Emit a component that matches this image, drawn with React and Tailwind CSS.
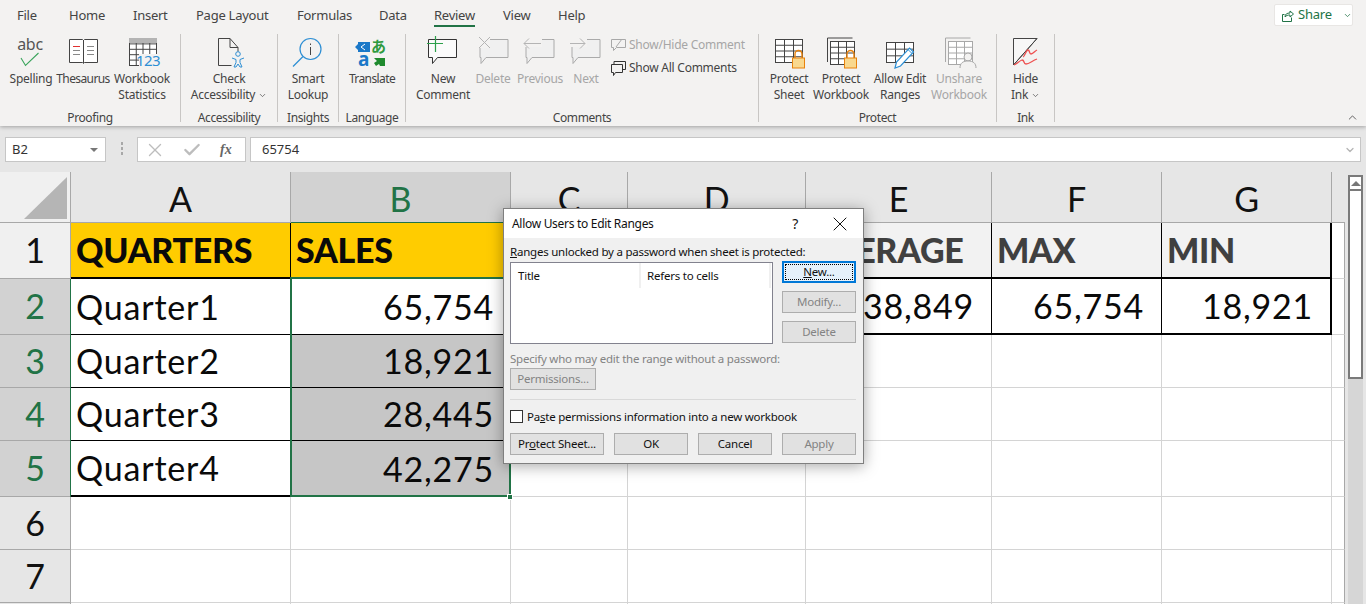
import { ChevronDown, ChevronUp, X, Check } from 'lucide-react';

const tabs = [
  { t: 'File', w: 'w-[52px]' },
  { t: 'Home', w: 'w-[64px]' },
  { t: 'Insert', w: 'w-[63px]' },
  { t: 'Page Layout', w: 'w-[101px]' },
  { t: 'Formulas', w: 'w-[82px]' },
  { t: 'Data', w: 'w-[55px]' },
  { t: 'Review', w: 'w-[69px]' },
  { t: 'View', w: 'w-[55px]' },
  { t: 'Help', w: 'w-[40px]' },
];

// icons are drawn in screen coordinates, the viewBox moves them into the 44x32 box
function Icon({ x0, children }) {
  return (
    <svg width="44" height="32" viewBox={`${x0} 36 44 32`} fill="none" className="shrink-0 overflow-visible">
      {children}
    </svg>
  );
}

function Sheet({ x, y, w, h, c = '#444', rows = 4, cols = 3 }) {
  const lines = [];
  for (let i = 1; i < rows; i++) lines.push(<path key={'r' + i} d={`M${x} ${y + (h * i) / rows}h${w}`} stroke={c} />);
  for (let i = 1; i < cols; i++) lines.push(<path key={'c' + i} d={`M${x + (w * i) / cols} ${y}v${h}`} stroke={c} />);
  return (
    <g>
      <rect x={x} y={y} width={w} height={h} stroke={c} fill="#fff" />
      {lines}
    </g>
  );
}

function Lock({ x, y }) {
  return (
    <g>
      <path d={`M${x + 3} ${y + 8}v-4a3.5 3.5 0 0 1 7 0v4`} stroke="#e8820c" strokeWidth="1.4" />
      <rect x={x + 0.5} y={y + 8} width="12" height="10" fill="#f9d88e" stroke="#e8820c" />
    </g>
  );
}

function Bubble({ x, c = '#aaa', fill = '#f0f0f0' }) {
  return <path d={`M${x + 0.5} 39.5h28v18h-22l-5 6v-6h-1z`} stroke={c} fill={fill} />;
}

const icons = {
  spelling: (
    <Icon x0={9}>
      <text x="30" y="50" textAnchor="middle" fontSize="16" fill="#555" fontFamily="Noto Sans">abc</text>
      <path d="M21 58l4.500 7.500L38.500 53" stroke="#3aa45c" strokeWidth="1.1" />
    </Icon>
  ),
  thesaurus: (
    <Icon x0={61}>
      <path d="M69.500 39.500h13l1 1 1-1h13v23h-13l-1 1-1-1h-13z" stroke="#444" fill="#fff" />
      <path d="M83.500 40v23" stroke="#444" />
      <path d="M73 46.500h7" stroke="#e03030" />
      <path d="M73 50.500h7M73 54.500h7M87 46.500h7M87 50.500h7M87 54.500h7" stroke="#888" />
    </Icon>
  ),
  statistics: (
    <Icon x0={120}>
      <Sheet x={129.500} y={38.500} w={27} h={27} rows={5} cols={4} />
      <rect x="129" y="38" width="28" height="5" fill="#b4b4b4" />
      <rect x="139" y="54" width="19" height="13" fill="#f3f2f1" />
      <text x="148" y="66" textAnchor="middle" fontSize="15" letterSpacing="-0.5" fill="#2e8fd4" fontFamily="Noto Sans">123</text>
    </Icon>
  ),
  accessibility: (
    <Icon x0={207}>
      <path d="M218.500 38.500h11.500l8 9v4" stroke="#444" />
      <path d="M218.500 38.500v27h13M230 38.500v9h8" stroke="#444" />
      <circle cx="238" cy="54" r="2.300" stroke="#2e8fd4" />
      <path d="M232 58l4 1.500v3l-2 4.500h2l2-3 2 3h2l-2-4.500v-3l4-1.500" stroke="#2e8fd4" />
    </Icon>
  ),
  lookup: (
    <Icon x0={286}>
      <circle cx="310.500" cy="49" r="10.500" stroke="#2e8fd4" strokeWidth="1.2" />
      <path d="M293 66.500l10-10" stroke="#2e8fd4" strokeWidth="1.2" />
      <path d="M310.500 47v8M310.500 43.500v1.500" stroke="#444" />
    </Icon>
  ),
  translate: (
    <Icon x0={350}>
      <path d="M358 42h12v10h-12l0-2-3-3 3-3z" fill="#1a78c8" />
      <path d="M365 44l-4 3 4 3" stroke="#fff" />
      <text x="363.500" y="66" textAnchor="middle" fontSize="19" fontWeight="700" fill="#1a78c8" fontFamily="Noto Sans">a</text>
      <text x="378.500" y="52" textAnchor="middle" fontSize="15" fontWeight="700" fill="#2e9a3e" fontFamily="Noto Sans CJK JP">あ</text>
      <path d="M374 58h11v8h-5l-1-2-3 2-2-3 3-2z" fill="#1f8a2e" />
    </Icon>
  ),
  newComment: (
    <Icon x0={421}>
      <path d="M428.500 39.500h28v18h-19l-5 6v-6h-4z" stroke="#333" fill="#fbfbfb" />
      <path d="M427 43.500h16M435.500 36v16" stroke="#2ca04a" strokeWidth="1.2" />
    </Icon>
  ),
  deleteComment: (
    <Icon x0={471}>
      <Bubble x={479.500} />
      <rect x="478" y="37" width="12" height="11" fill="#f3f2f1" />
      <path d="M479 37l11 11M490 37l-11 11" stroke="#b4b4b4" />
    </Icon>
  ),
  previous: (
    <Icon x0={518}>
      <Bubble x={525.500} />
      <rect x="524" y="39" width="18" height="8" fill="#f3f2f1" />
      <path d="M524 43.500h17M529 38.500l-5 5 5 5" stroke="#b4b4b4" />
    </Icon>
  ),
  next: (
    <Icon x0={564}>
      <Bubble x={571.500} />
      <rect x="569" y="39" width="18" height="8" fill="#f3f2f1" />
      <path d="M570 43.500h15M580 38.500l5 5-5 5" stroke="#b4b4b4" />
    </Icon>
  ),
  protectSheet: (
    <Icon x0={767}>
      <Sheet x={775.500} y={39.500} w={27} h={23} rows={4} cols={3} />
      <Lock x={792} y={50} />
    </Icon>
  ),
  protectWorkbook: (
    <Icon x0={819}>
      <path d="M827.500 62v-24h25" stroke="#444" />
      <Sheet x={830.500} y={41.500} w={24} h={23} rows={4} cols={3} />
      <Lock x={844} y={50} />
    </Icon>
  ),
  allowEdit: (
    <Icon x0={878}>
      <Sheet x={886.500} y={42.500} w={27} h={20} rows={3} cols={3} />
      <path d="M895 68l1.500-6 13-14 4 4-13 14z" fill="#fff" stroke="#2e8fd4" strokeWidth="1.2" />
      <path d="M908 49.500l4 4" stroke="#2e8fd4" />
    </Icon>
  ),
  unshare: (
    <Icon x0={937}>
      <path d="M945.500 62v-24h25" stroke="#a8a8a8" />
      <Sheet x={948.500} y={41.500} w={24} h={23} rows={4} cols={3} c="#a8a8a8" />
      <circle cx="968" cy="57" r="4" fill="#f3f2f1" stroke="#a8a8a8" />
      <path d="M960 68c0-5 3-7 8-7s8 2 8 7" fill="#f3f2f1" stroke="#a8a8a8" />
    </Icon>
  ),
  ink: (
    <Icon x0={1003}>
      <path d="M1012.500 65V38.500H1036z" fill="#f7f7f7" stroke="#444" />
      <path d="M1012.500 65L1036 38.500" stroke="#444" />
      <path d="M1022 57c2-1 3-7 5-7s1 4 3 4 4-3 6-4" stroke="#ee5050" strokeWidth="1.300" />
      <path d="M1013 65c3-1 5-4 8-5 3 0 1 4 4 4s6-3 11-5" stroke="#ee5050" strokeWidth="1.300" />
    </Icon>
  ),
};

function RibbonButton({ icon, lines, w, muted, caret, tight }) {
  return (
    <div className={`flex flex-col items-center shrink-0 ${w}`}>
      <div className="mt-[2px] mb-[3px] h-8 flex justify-center">{icon}</div>
      {lines.map((t, i) => (
        <div
          key={t}
          className={`h-4 leading-4 whitespace-nowrap flex items-center gap-[3px] ${muted ? 'text-[#a6a6a6]' : 'text-[#444]'} ${tight ? 'tracking-[-0.6px]' : ''}`}
        >
          {t}
          {caret && i === lines.length - 1 && <ChevronDown size={9} strokeWidth={2} className="text-[#555]" />}
        </div>
      ))}
    </div>
  );
}

function Group({ label, w, className = '', children }) {
  return (
    <div className={`shrink-0 h-[88px] mt-[4px] border-r border-[#c8c6c4] flex flex-col ${w}`}>
      <div className={`flex flex-1 ${className}`}>{children}</div>
      <div className="h-3 leading-4 text-center text-[#444] tracking-[-0.4px]">{label}</div>
    </div>
  );
}

function Ribbon() {
  return (
    <div className="relative z-10 h-[126px] bg-[#f3f2f1] shadow-[0_1px_4px_rgba(0,0,0,0.3)] text-[12px] tracking-[-0.25px]">
      <div className="h-[30px] flex pl-[17px] text-[13px] tracking-[-0.25px] text-[#444]">
        {tabs.map(({ t, w }) => (
          <div key={t} className={`${w} h-[30px] flex items-center pt-[1px] whitespace-nowrap`}>
            <span className="relative">
              {t}
              {t === 'Review' && <span className="absolute left-0 right-0 top-[19px] h-[2px] bg-[#217346]" />}
            </span>
          </div>
        ))}
      </div>
      <div className="absolute left-[1274px] top-[4px] w-[79px] h-[22px] bg-white border border-[#e8e6e4] rounded-[2px] flex items-center pl-[7px] text-[#217346] text-[13px] tracking-[-0.2px]">
        <svg width="12" height="13" viewBox="0 0 12 13" fill="none" stroke="#217346" className="mr-[4px]">
          <path d="M2.500 5.500H.500v7h9v-4M3 8c0-3 2-4 5-4V2l3.500 3L8 8V6C6 6 4 6.500 3 8z" />
        </svg>
        Share
        <ChevronDown size={9} strokeWidth={2} className="ml-[11px] text-[#217346]" />
      </div>
      <div className="flex h-[96px]">
        <Group label="Proofing" w="w-[181px]" className="pl-[5px]">
          <RibbonButton w="w-[52px]" icon={icons.spelling} lines={['Spelling']} />
          <RibbonButton w="w-[52px]" tight icon={icons.thesaurus} lines={['Thesaurus']} />
          <RibbonButton w="w-[66px]" icon={icons.statistics} lines={['Workbook', 'Statistics']} />
        </Group>
        <Group label="Accessibility" w="w-[97px]" className="justify-center">
          <RibbonButton w="w-[90px]" icon={icons.accessibility} lines={['Check', 'Accessibility']} caret />
        </Group>
        <Group label="Insights" w="w-[61px]" className="justify-center">
          <RibbonButton w="w-[50px]" icon={icons.lookup} lines={['Smart', 'Lookup']} />
        </Group>
        <Group label="Language" w="w-[67px]" className="justify-center">
          <RibbonButton w="w-[60px]" tight icon={icons.translate} lines={['Translate']} />
        </Group>
        <Group label="Comments" w="w-[353px]" className="pl-[12px]">
          <RibbonButton w="w-[50px]" icon={icons.newComment} lines={['New', 'Comment']} />
          <RibbonButton w="w-[50px]" muted icon={icons.deleteComment} lines={['Delete']} />
          <RibbonButton w="w-[44px]" muted icon={icons.previous} lines={['Previous']} />
          <RibbonButton w="w-[48px]" muted icon={icons.next} lines={['Next']} />
          <div className="flex flex-col mt-[3px] ml-[1px] gap-[7px]">
            <div className="h-4 flex items-center gap-[3px] text-[#a6a6a6] whitespace-nowrap">
              <svg width="15" height="14" viewBox="0 0 15 14" fill="none" stroke="#a8a8a8">
                <path d="M.500 1.500h14v8h-9l-3 3v-3h-2zM11 1l-6 8" />
              </svg>
              Show/Hide Comment
            </div>
            <div className="h-4 flex items-center gap-[3px] text-[#444] whitespace-nowrap">
              <svg width="15" height="15" viewBox="0 0 15 15" fill="none" stroke="#333">
                <path d="M.500 3.500h11v8h-7l-2 3v-3h-2zM3 3.500v-3h11.500v8h-3" />
              </svg>
              Show All Comments
            </div>
          </div>
        </Group>
        <Group label="Protect" w="w-[238px]" className="pl-[4px]">
          <RibbonButton w="w-[52px]" icon={icons.protectSheet} lines={['Protect', 'Sheet']} />
          <RibbonButton w="w-[52px]" icon={icons.protectWorkbook} lines={['Protect', 'Workbook']} />
          <RibbonButton w="w-[66px]" icon={icons.allowEdit} lines={['Allow Edit', 'Ranges']} />
          <RibbonButton w="w-[52px]" muted icon={icons.unshare} lines={['Unshare', 'Workbook']} />
        </Group>
        <Group label="Ink" w="w-[58px]" className="justify-center">
          <RibbonButton w="w-[50px]" icon={icons.ink} lines={['Hide', 'Ink']} caret />
        </Group>
      </div>
      <ChevronUp size={13} strokeWidth={1.500} className="absolute left-[1346px] top-[111px] text-[#444]" />
    </div>
  );
}

function FormulaBar() {
  return (
    <div className="h-[46px] bg-[#e6e6e6] flex items-start pt-[11px] pl-[5px] pr-[5px] text-[13px] text-[#333]">
      <div className="w-[101px] h-[25px] bg-white border border-[#c6c6c6] flex items-center justify-between pl-[6px] pr-[7px] pt-[1px]">
        B2
        <div className="w-0 h-0 border-x-[4px] border-x-transparent border-t-[4px] border-t-[#777]" />
      </div>
      <div className="w-[31px] flex justify-center pt-[5px] text-[#a0a0a0]">
        <div className="flex flex-col gap-[2px]">
          <div className="w-[2px] h-[3px] bg-[#a8a8a8]" />
          <div className="w-[2px] h-[3px] bg-[#a8a8a8]" />
          <div className="w-[2px] h-[3px] bg-[#a8a8a8]" />
        </div>
      </div>
      <div className="w-[109px] h-[25px] bg-white border border-[#c6c6c6] flex items-center pl-[6px]">
        <X size={22} strokeWidth={1.500} className="text-[#bdbdbd]" />
        <Check size={20} strokeWidth={2.800} className="ml-[16px] text-[#bdbdbd]" />
        <span className="ml-[18px] font-['Liberation_Serif'] italic text-[14px] font-bold text-[#666]">fx</span>
      </div>
      <div className="ml-[4px] flex-1 h-[25px] bg-white border border-[#c6c6c6] flex items-center justify-between pl-[11px] pr-[4px] pt-[1px]">
        65754
        <ChevronDown size={12} strokeWidth={2.500} className="text-[#b4b4b4]" />
      </div>
    </div>
  );
}

const colHeaders = [
  { t: 'A', c: 'w-[220px] bg-[#e6e6e6] text-[#111] border-r border-b border-[#a8a8a8]' },
  { t: 'B', c: 'w-[220px] bg-[#d2d2d2] text-[#217346] border-r border-b border-[#a8a8a8]' },
  { t: 'C', c: 'w-[117px] bg-[#e6e6e6] text-[#111] border-r border-b border-[#a8a8a8]' },
  { t: 'D', c: 'w-[178px] bg-[#e6e6e6] text-[#111] border-r border-b border-[#a8a8a8]' },
  { t: 'E', c: 'w-[186px] bg-[#e6e6e6] text-[#111] border-r border-b border-[#a8a8a8]' },
  { t: 'F', c: 'w-[170px] bg-[#e6e6e6] text-[#111] border-r border-b border-[#a8a8a8]' },
  { t: 'G', c: 'w-[170px] bg-[#e6e6e6] text-[#111] border-r border-b border-[#a8a8a8]' },
  { t: '', c: 'w-[13px] bg-[#e6e6e6] border-b border-[#a8a8a8]' },
];

const widths = ['w-[220px]', 'w-[220px]', 'w-[117px]', 'w-[178px]', 'w-[186px]', 'w-[170px]', 'w-[170px]', 'w-[13px]'];

const grid = 'bg-white border-r border-b border-[#d4d4d4]';
const gridEnd = 'bg-white border-r border-b border-r-[#a8a8a8] border-b-[#d4d4d4]';
const boxed = 'border-r border-b-2 border-black bg-white';
const plain = (n) => [...Array.from({ length: n - 1 }, () => ({ c: grid })), { c: gridEnd }];

const rows = [
  {
    n: '1', h: 'h-[56px]', hc: 'bg-[#f0f0f0] text-[#111]',
    cells: [
      { t: 'QUARTERS', bold: true, c: 'bg-[#ffcc00] border-r border-b-2 border-black' },
      { t: 'SALES', bold: true, c: 'bg-[#ffcc00] border-b-2 border-[#217346]' },
      { c: 'bg-[#f2f2f2] border-b-2 border-black' },
      { c: 'bg-[#f2f2f2] border-b-2 border-black' },
      { t: 'AVERAGE', bold: true, gray: true, c: 'bg-[#f2f2f2] border-r border-b-2 border-black' },
      { t: 'MAX', bold: true, gray: true, c: 'bg-[#f2f2f2] border-r border-b-2 border-black' },
      { t: 'MIN', bold: true, gray: true, c: 'bg-[#f2f2f2] border-r-2 border-b-2 border-black' },
      { c: gridEnd },
    ],
  },
  {
    n: '2', h: 'h-[56px]', hc: 'bg-[#d2d2d2] text-[#217346]',
    cells: [
      { t: 'Quarter1', c: 'bg-white border-r border-b border-black' },
      { t: '65,754', right: 'pr-[17px]', c: 'bg-white border-b border-black' },
      { c: boxed },
      { c: boxed },
      { t: '38,849', right: 'pr-[17px]', c: boxed },
      { t: '65,754', right: 'pr-[17px]', c: boxed },
      { t: '18,921', right: 'pr-[17px]', c: 'border-r-2 border-b-2 border-black bg-white' },
      { c: gridEnd },
    ],
  },
  {
    n: '3', h: 'h-[53px]', hc: 'bg-[#d2d2d2] text-[#217346]',
    cells: [
      { t: 'Quarter2', c: 'bg-white border-r border-b border-black' },
      { t: '18,921', right: 'pr-[17px]', c: 'bg-[#c6c6c6] border-b border-black' },
      ...plain(6),
    ],
  },
  {
    n: '4', h: 'h-[53px]', hc: 'bg-[#d2d2d2] text-[#217346]',
    cells: [
      { t: 'Quarter3', c: 'bg-white border-r border-b border-black' },
      { t: '28,445', right: 'pr-[17px]', c: 'bg-[#c6c6c6] border-b border-black' },
      ...plain(6),
    ],
  },
  {
    n: '5', h: 'h-[56px]', hc: 'bg-[#d2d2d2] text-[#217346]',
    cells: [
      { t: 'Quarter4', c: 'bg-white border-r border-b-2 border-black' },
      { t: '42,275', right: 'pr-[17px]', c: 'bg-[#c6c6c6] border-b border-[#c6c6c6]' },
      ...plain(6),
    ],
  },
  { n: '6', h: 'h-[53px]', hc: 'bg-[#e6e6e6] text-[#111]', cells: plain(8) },
  { n: '7', h: 'h-[53px]', hc: 'bg-[#e6e6e6] text-[#111]', cells: plain(8) },
  { n: '', h: 'h-[10px]', hc: 'bg-[#e6e6e6]', cells: plain(8) },
];

function Spreadsheet() {
  return (
    <div className="relative flex-1 flex bg-[#e6e6e6] overflow-hidden font-['Lato',sans-serif] text-[34px] tracking-[0.8px]">
      <div className="relative w-[1345px] shrink-0">
        <div className="flex h-[51px]">
          <div className="w-[71px] bg-[#f0f0f0] border-r border-b border-[#a8a8a8] flex items-end justify-end pr-[3px] pb-[3px]">
            <div className="w-0 h-0 border-l-[43px] border-l-transparent border-b-[42px] border-b-[#b5b5b5]" />
          </div>
          {colHeaders.map((h) => (
            <div key={h.t + h.c} className={`${h.c} flex items-center justify-center pt-[3px] pl-[1px]`}>
              {h.t}
            </div>
          ))}
        </div>
        {rows.map((r) => (
          <div key={r.n} className={`flex ${r.h}`}>
            <div className={`w-[71px] ${r.hc} border-r border-b border-[#a8a8a8] flex items-center justify-center pl-[1px] pb-[2px]`}>
              {r.n}
            </div>
            {r.cells.map((cell, i) => (
              <div
                key={i}
                className={`${widths[i]} ${cell.c} flex items-center whitespace-nowrap pb-[1px] ${
                  cell.right ? `justify-end ${cell.right}` : 'pl-[5px]'
                } ${cell.bold ? 'font-black tracking-[-0.3px] pb-[2px]' : ''} ${cell.gray ? 'text-[#404040]' : 'text-[#0a0a0a]'}`}
              >
                {cell.t}
              </div>
            ))}
          </div>
        ))}
        {/* selection frame for B2:B5 and the green edges next to it */}
        <div className="absolute left-[290px] top-[105px] w-[221px] h-[220px] border-2 border-[#217346] pointer-events-none" />
        <div className="absolute left-[291px] top-[50px] w-[219px] h-[1px] bg-[#217346]" />
        <div className="absolute left-[70px] top-[107px] w-[1px] h-[218px] bg-[#217346]" />
        <div className="absolute left-[507px] top-[322px] w-[6px] h-[6px] bg-[#217346] border border-white" />
      </div>
      <div className="flex-1 pl-[3px] pt-[3px]">
        <div className="w-[15px] h-[16px] bg-white border-2 border-[#7a7a7a] flex items-center justify-center">
          <div className="w-0 h-0 border-x-[5px] border-x-transparent border-b-[5px] border-b-[#777]" />
        </div>
        <div className="w-[15px] h-[190px] -mt-[2px] bg-white border-2 border-[#7a7a7a]" />
        <div className="w-[15px] h-[400px] bg-[#d6d6d6]" />
      </div>
      <Dialog />
    </div>
  );
}

function DlgButton({ w, children, disabled, primary }) {
  if (primary) {
    return (
      <div className={`${w} h-[22px] shrink-0 border-2 border-[#0078d7] bg-[#e5f1fb] p-[1px]`}>
        <div className="h-full border border-dotted border-black flex items-center justify-center text-[#111]">
          {children}
        </div>
      </div>
    );
  }
  return (
    <div
      className={`${w} h-[22px] shrink-0 bg-[#e1e1e1] border border-[#adadad] flex items-center justify-center ${
        disabled ? 'text-[#838383]' : 'text-[#111]'
      }`}
    >
      {children}
    </div>
  );
}

function Dialog() {
  return (
    <div className="absolute left-[503px] top-[36px] w-[361px] h-[256px] bg-[#f0f0f0] border border-[#7f7f7f] shadow-[0_2px_14px_rgba(0,0,0,0.35)] font-['Noto_Sans',sans-serif] text-[11.5px] tracking-[-0.23px] text-[#111]">
      <div className="h-[29px] bg-white flex items-center pl-[8px] text-[12px] tracking-[-0.3px]">
        Allow Users to Edit Ranges
        <span className="ml-auto mr-[30px] text-[14px]">?</span>
        <X size={24} strokeWidth={1} className="mr-[11px]" />
      </div>
      <div className="flex flex-col pl-[6px] pr-[7px]">
        <div className="h-4 mt-[6px] leading-4 whitespace-nowrap">
          <u>R</u>anges unlocked by a password when sheet is protected:
        </div>
        <div className="flex mt-[2px] h-[82px]">
          <div className="w-[263px] h-[82px] bg-white border border-[#82828e] flex items-start">
            <div className="w-[130px] h-[25px] pl-[7px] border-r-2 border-[#f0f0f0] flex items-center">Title</div>
            <div className="w-[130px] h-[25px] pl-[6px] border-r-2 border-[#f0f0f0] flex items-center">Refers to cells</div>
          </div>
          <div className="ml-[9px] -mt-[1px] flex flex-col gap-[8px]">
            <DlgButton w="w-[74px]" primary>
              <span><u>N</u>ew...</span>
            </DlgButton>
            <DlgButton w="w-[74px]" disabled>Modify...</DlgButton>
            <DlgButton w="w-[74px]" disabled>Delete</DlgButton>
          </div>
        </div>
        <div className="h-4 mt-[7px] leading-4 text-[#838383] whitespace-nowrap">
          Specify who may edit the range without a password:
        </div>
        <div className="mt-[1px]">
          <DlgButton w="w-[86px]" disabled>Permissions...</DlgButton>
        </div>
        <div className="mt-[9px] h-[1px] bg-[#d9d9d9]" />
        <div className="mt-[10px] h-[13px] flex items-center whitespace-nowrap">
          <div className="w-[13px] h-[13px] bg-white border border-[#333] mr-[4px]" />
          <span>Pa<u>s</u>te permissions information into a new workbook</span>
        </div>
        <div className="mt-[10px] flex gap-[10px]">
          <DlgButton w="w-[94px]">
            <span>Pr<u>o</u>tect Sheet...</span>
          </DlgButton>
          <DlgButton w="w-[74px]">OK</DlgButton>
          <DlgButton w="w-[74px]">Cancel</DlgButton>
          <DlgButton w="w-[74px]" disabled>Apply</DlgButton>
        </div>
      </div>
    </div>
  );
}

export default function App() {
  return (
    <div className="h-[604px] w-[1366px] overflow-hidden flex flex-col font-['Noto_Sans',sans-serif]">
      <Ribbon />
      <FormulaBar />
      <Spreadsheet />
    </div>
  );
}
